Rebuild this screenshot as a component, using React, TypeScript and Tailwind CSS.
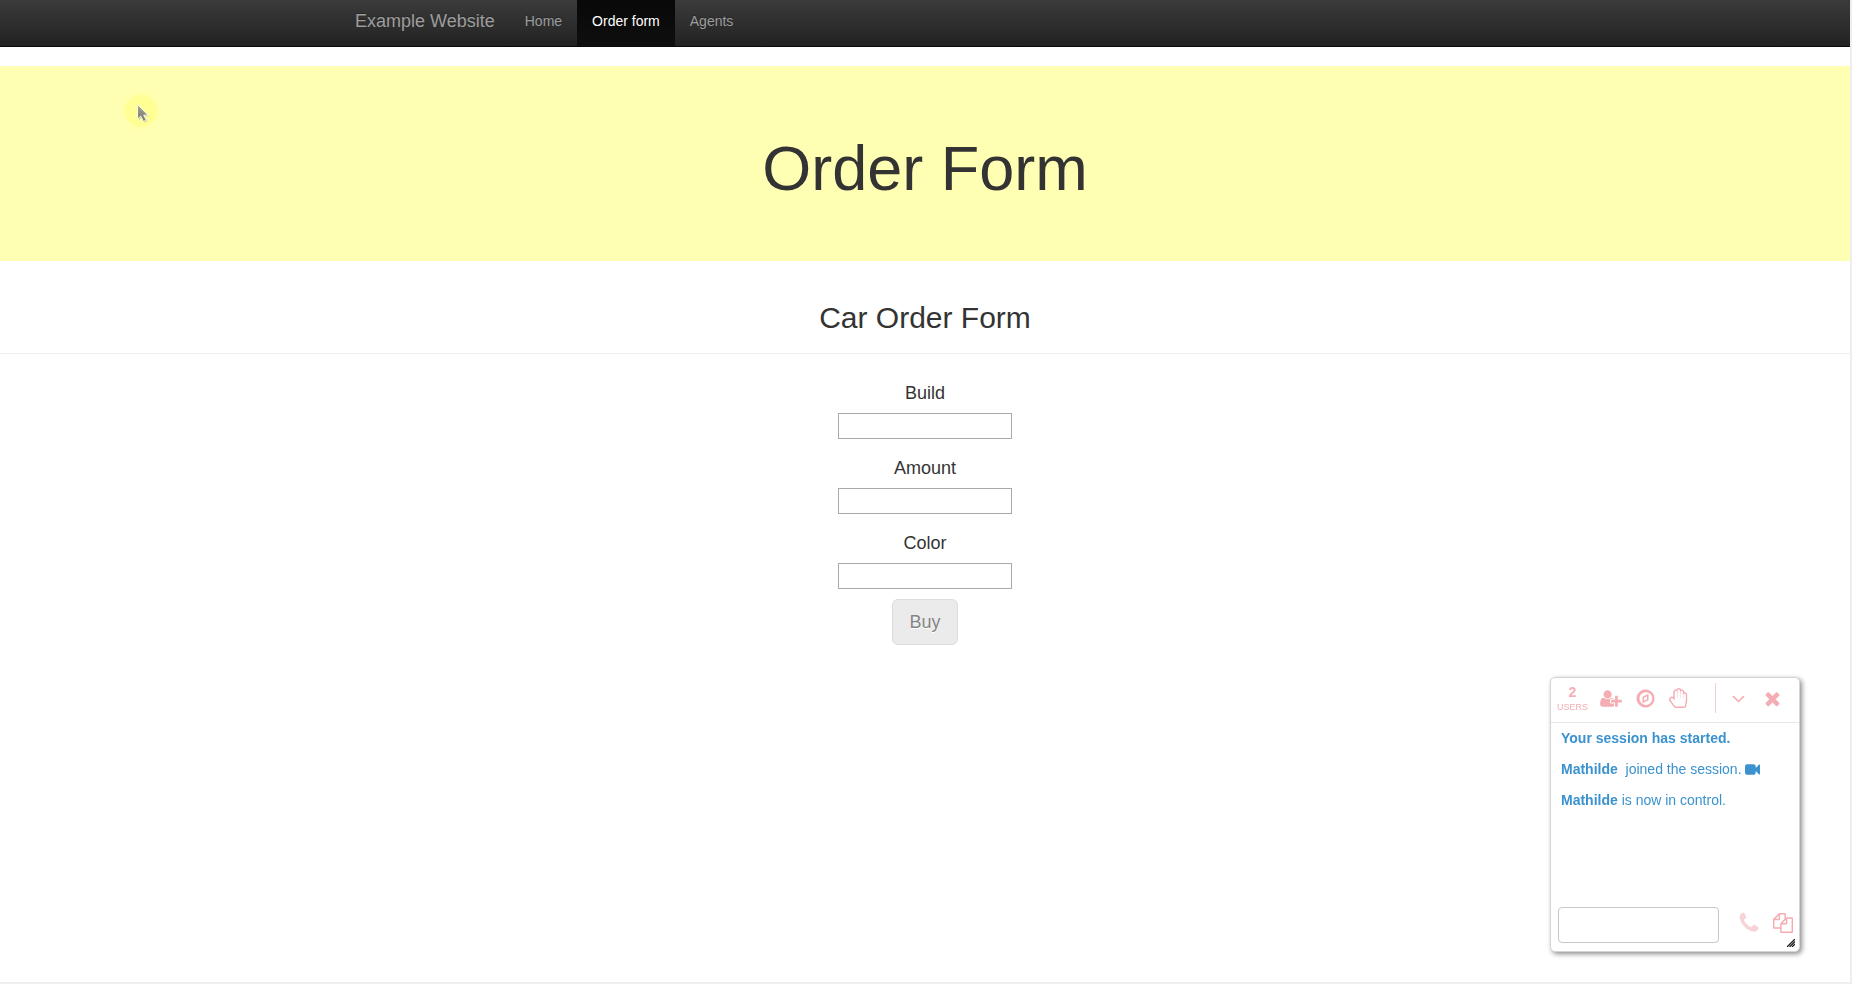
import React from "react";

type IconProps = { path: string; className: string; viewBox?: string };

function Icon({ path, className, viewBox = "0 0 1792 1792" }: IconProps) {
  return (
    <svg viewBox={viewBox} className={className} fill="currentColor" aria-hidden="true">
      <path d={path} />
    </svg>
  );
}

const USER_PLUS =
  "M704 896q-159 0-271.5-112.5t-112.5-271.5 112.5-271.5 271.5-112.5 271.5 112.5 112.5 271.5-112.5 271.5-271.5 112.5zm960 128h352q13 0 22.5 9.5t9.5 22.5v192q0 13-9.5 22.5t-22.5 9.5h-352v352q0 13-9.5 22.5t-22.5 9.5h-192q-13 0-22.5-9.5t-9.5-22.5v-352h-352q-13 0-22.5-9.5t-9.5-22.5v-192q0-13 9.5-22.5t22.5-9.5h352v-352q0-13 9.5-22.5t22.5-9.5h192q13 0 22.5 9.5t9.5 22.5v352zm-736 224q0 52 38 90t90 38h256v238q-68 50-171 50h-874q-121 0-194-69t-73-190q0-53 3.5-103.5t14-109 26.5-108.5 43-97.5 62-81 85.5-53.5 111.5-20q19 0 39 17 79 61 154.5 91.5t164.5 30.5 164.5-30.5 154.5-91.5q20-17 39-17 132 0 217 96h-223q-52 0-90 38t-38 90v192z";
const COMPASS =
  "M768 1087v-254l256-128v254zM1152 497l-512 256v542l512-256zM1472 896q0-148-73-273t-198-198-273-73-273 73-198 198-73 273 73 273 198 198 273 73 273-73 198-198 73-273zm192 0q0 209-103 385.5t-279.5 279.5-385.5 103-385.5-103-279.5-279.5-103-385.5 103-385.5 279.5-279.5 385.5-103 385.5 103 279.5 279.5 103 385.5z";
const HAND =
  "M880 128q-46 0-79 33t-33 79v656h-32v-528q0-46-33-79t-79-33-79 33-33 79v528 256l-154-205q-38-51-102-51-53 0-90.5 37.5t-37.5 90.5q0 43 26 77l384 512q38 51 102 51h688q34 0 61-22t34-56l76-405q5-32 5-59v-498q0-46-33-79t-79-33-79 33-33 79v272h-32v-528q0-46-33-79t-79-33-79 33-33 79v528h-32v-656q0-46-33-79t-79-33zm0-128q68 0 125.5 35.5t88.5 96.5q19-4 42-4 99 0 169.5 70.5t70.5 169.5v17q105-6 180.5 64t75.5 175v498q0 40-8 83l-76 404q-14 79-76.5 131t-143.5 52h-688q-60 0-114.5-27.5t-90.5-74.5l-384-512q-51-68-51-154 0-106 75-181t181-75q78 0 128 34v-434q0-99 70.5-169.5t169.5-70.5q23 0 42 4 31-61 88.5-96.5t125.5-35.5z";
const ANGLE_DOWN =
  "M1395 736q0 13-10 23l-466 466q-10 10-23 10t-23-10l-466-466q-10-10-10-23t10-23l50-50q10-10 23-10t23 10l393 393 393-393q10-10 23-10t23 10l50 50q10 10 10 23z";
const TIMES =
  "M1490 1322q0 40-28 68l-136 136q-28 28-68 28t-68-28l-294-294-294 294q-28 28-68 28t-68-28l-136-136q-28-28-28-68t28-68l294-294-294-294q-28-28-28-68t28-68l136-136q28-28 68-28t68 28l294 294 294-294q28-28 68-28t68 28l136 136q28 28 28 68t-28 68l-294 294 294 294q28 28 28 68z";
const VIDEO =
  "M1792 352v1088q0 42-39 59-13 5-25 5-27 0-45-19l-403-403v166q0 119-84.5 203.5t-203.5 84.5h-704q-119 0-203.5-84.5t-84.5-203.5v-704q0-119 84.5-203.5t203.5-84.5h704q119 0 203.5 84.5t84.5 203.5v165l403-402q18-19 45-19 12 0 25 5 39 17 39 59z";
const PHONE =
  "M1600 1240q0 27-10 70.5t-21 68.5q-21 50-122 106-94 51-186 51-27 0-52.5-3.5t-57.5-12.5-47.5-14.5-55.5-20.5-49-18q-98-35-175-83-128-79-264.5-215.5t-215.5-264.5q-48-77-83-175-3-9-18-49t-20.5-55.5-14.5-47.5-12.5-57.5-3.5-52.5q0-92 51-186 56-101 106-122 25-11 68.5-21t70.5-10q14 0 21 3 18 6 53 76 11 19 30 54t35 63.5 31 53.5q3 4 17.5 25t21.5 35.5 7 28.5q0 20-28.5 50t-62 55-62 53-28.5 46q0 9 5 22.5t8.5 20.5 14 24 11.5 19q76 137 174 235t235 174q2 1 19 11.5t24 14 20.5 8.5 22.5 5q18 0 46-28.5t53-62 55-62 50-28.5q14 0 28.5 7t35.5 21.5 25 17.5q25 15 53.5 31t63.5 35 54 30q70 35 76 53 3 7 3 21z";
const FILES =
  "M1696 384q40 0 68 28t28 68v1216q0 40-28 68t-68 28h-960q-40 0-68-28t-28-68v-288h-544q-40 0-68-28t-28-68v-672q0-40 20-88t48-76l408-408q28-28 76-48t88-20h416q40 0 68 28t28 68v328q68-40 128-40h416zm-544 213l-299 299h299v-299zm-640-384l-299 299h299v-299zm196 647l316-316v-416h-384v416q0 40-28 68t-68 28h-416v640h512v-256q0-40 20-88t48-76zm956 804v-1152h-384v416q0 40-28 68t-68 28h-416v640h896z";

function Navbar() {
  return (
    <nav className="border-b border-[#080808] bg-linear-to-b from-[#3b3b3b] to-[#222222]">
      <div className="mx-auto flex max-w-[1170px] text-sm leading-5 text-[#9d9d9d] [text-shadow:0_-1px_0_rgba(0,0,0,0.25)]">
        <a href="#" className="px-[15px] pt-[11px] pb-[15px] text-lg leading-5">
          Example Website
        </a>
        <a href="#home" className="px-[15px] pt-[11px] pb-[15px]">
          Home
        </a>
        <a
          href="#order"
          aria-current="page"
          className="bg-linear-to-b from-[#080808] to-[#0f0f0f] px-[15px] pt-[11px] pb-[15px] text-white"
        >
          Order form
        </a>
        <a href="#agents" className="px-[15px] pt-[11px] pb-[15px]">
          Agents
        </a>
      </div>
    </nav>
  );
}

function Pointer() {
  return (
    <svg
      viewBox="0 0 48 48"
      className="pointer-events-none absolute top-[87px] left-[117px] size-12"
      aria-hidden="true"
    >
      <defs>
        <linearGradient id="arrow" x1="0" y1="0" x2="0" y2="1">
          <stop offset="0" stopColor="#a8a894" />
          <stop offset="1" stopColor="#77776b" />
        </linearGradient>
      </defs>
      <circle cx="24" cy="24" r="20" fill="#ffffa8" opacity="0.6" />
      <circle cx="24" cy="24" r="16" fill="#ffff94" />
      <path d="M22 19v14l3-2.5 2.5 5 3-1.2-2.5-5h4z" fill="#8a8a60" opacity="0.4" />
      <path
        d="M20.5 17.5v14.5l3.2-2.8 2.8 5.3 2.8-1.3-2.6-5h4.3z"
        fill="url(#arrow)"
        stroke="#fbfbee"
        strokeWidth="1"
        strokeLinejoin="round"
      />
    </svg>
  );
}

function OrderForm() {
  return (
    <form className="flex flex-col items-center pt-[29px]">
      {["Build", "Amount", "Color"].map((name) => (
        <div key={name} className="mb-[19px] flex flex-col items-center gap-[10px] last-of-type:mb-[10px]">
          <label htmlFor={name} className="text-lg leading-5">
            {name}
          </label>
          <input
            id={name}
            type="text"
            className="h-[26px] w-[174px] border border-[#a9a9a9] bg-white px-1 text-sm outline-none"
          />
        </div>
      ))}
      <button
        type="button"
        disabled
        className="h-[46px] rounded-md border border-[#dddddd] bg-[#ebebeb] px-4 text-lg text-[#848484] [text-shadow:0_1px_0_#fff]"
      >
        Buy
      </button>
    </form>
  );
}

function SessionPanel() {
  return (
    <aside className="fixed right-[52px] bottom-8 flex h-[275px] w-[250px] flex-col rounded-[5px] border border-[#d4d4d4] bg-white text-sm leading-5 shadow-[2px_2px_5px_rgba(0,0,0,0.45)]">
      <header className="flex h-[45px] items-center border-b border-[#e8e8e8] pr-4 pb-1 pl-[6px] text-[#f4adb2]">
        <div className="flex w-[31px] flex-col items-center">
          <b className="leading-[18px]">2</b>
          <span className="text-[9px] leading-3">USERS</span>
        </div>
        <button type="button" aria-label="Invite user" className="ml-3">
          <Icon path={USER_PLUS} viewBox="0 0 2048 1792" className="h-[19px] w-[22px]" />
        </button>
        <button type="button" aria-label="Browse" className="ml-[13px]">
          <Icon path={COMPASS} className="size-[21px]" />
        </button>
        <button type="button" aria-label="Raise hand" className="ml-[13px]">
          <Icon path={HAND} className="size-5" />
        </button>
        <span className="ml-auto h-[30px] w-px bg-[#f0cfd2]" />
        <button type="button" aria-label="Minimize" className="ml-3">
          <Icon path={ANGLE_DOWN} className="size-[21px]" />
        </button>
        <button type="button" aria-label="Close" className="ml-[13px]">
          <Icon path={TIMES} className="size-[21px]" />
        </button>
      </header>
      <div className="flex grow flex-col gap-[11px] px-[10px] pt-[5px] text-[#3a92cf]">
        <p className="font-bold">Your session has started.</p>
        <p className="flex items-center whitespace-pre">
          <b>Mathilde</b>
          {"  joined the session. "}
          <Icon path={VIDEO} className="size-[15px]" />
        </p>
        <p>
          <b>Mathilde</b> is now in control.
        </p>
      </div>
      <footer className="flex items-start pr-[6px] pb-2 pl-[7px]">
        <input
          type="text"
          aria-label="Message"
          className="h-9 w-[161px] rounded-[4px] border border-[#c8c8c8] bg-white px-3 outline-none"
        />
        <button type="button" aria-label="Call" className="mt-1 ml-auto text-[#f8d3d6]">
          <Icon path={PHONE} className="size-6" />
        </button>
        <button type="button" aria-label="Copy" className="mt-[6px] ml-3 text-[#f4adb2]">
          <Icon path={FILES} className="size-5" />
        </button>
      </footer>
      <svg
        viewBox="0 0 8 8"
        className="absolute right-1 bottom-1 size-2"
        stroke="#222222"
        strokeWidth="1.3"
        aria-hidden="true"
      >
        <path d="M0 8L8 0M2.5 8L8 2.5M5 8L8 5" />
      </svg>
    </aside>
  );
}

export default function App() {
  return (
    <div className="relative min-h-screen border-r-2 border-b-2 border-[#eeeeee] bg-white font-['Liberation_Sans',Arial,sans-serif] text-[#333333]">
      <Navbar />
      <main className="pt-[19px] text-center">
        <div className="bg-[#ffffb3] pt-[68px] pb-[58px]">
          <h1 className="text-[63px] leading-[69px]">Order Form</h1>
        </div>
        <div className="border-b border-[#eeeeee] pt-10 pb-[19px]">
          <h2 className="text-[30px] leading-[33px]">Car Order Form</h2>
        </div>
        <OrderForm />
      </main>
      <Pointer />
      <SessionPanel />
    </div>
  );
}
